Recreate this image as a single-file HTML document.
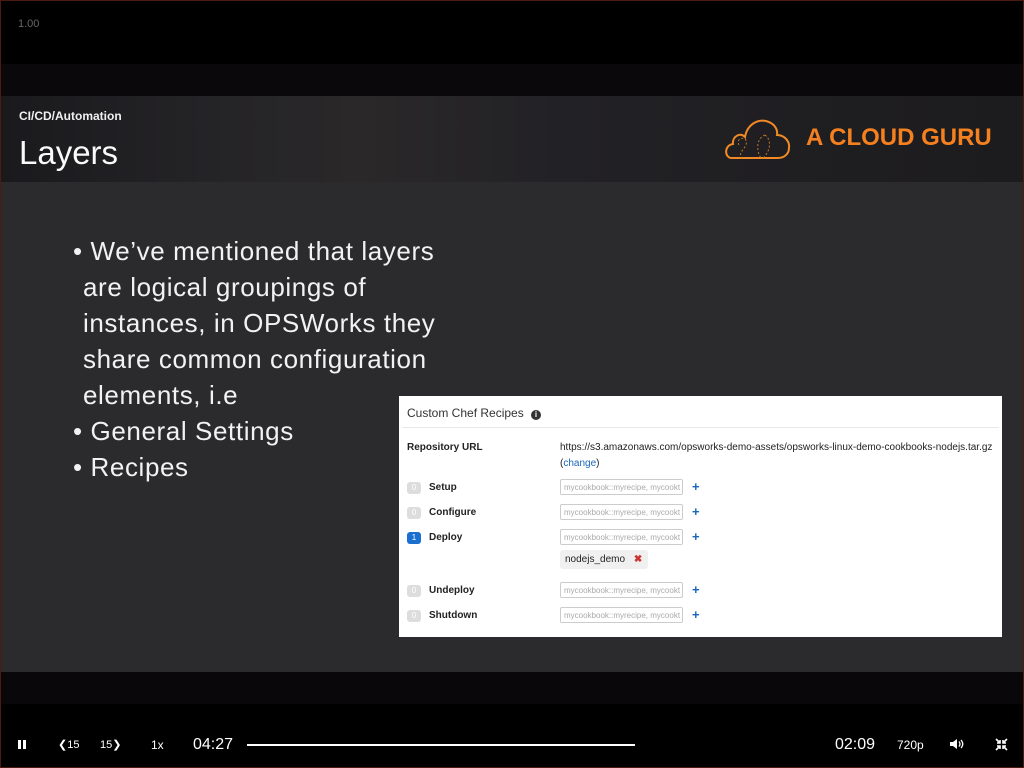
<!DOCTYPE html>
<html><head><meta charset="utf-8"><style>
*{margin:0;padding:0;box-sizing:border-box}
body{width:1024px;height:768px;background:#000;position:relative;overflow:hidden;font-family:"Liberation Sans",sans-serif;color:#fff}
.abs{position:absolute}
.frame{position:absolute;left:0;top:0;width:1024px;height:768px;border:1px solid #4a1c12;pointer-events:none}
.hdr{left:0;top:96px;width:1024px;height:86px;background:linear-gradient(90deg,#1a191c 0%,#242326 20%,#2a2829 35%,#222125 55%,#1c1b1d 100%)}
.bodyb{left:0;top:182px;width:1024px;height:490px;background:#2b2a2d}
.bul{left:73px;font-size:26px;color:#f2f2f2;line-height:36px;letter-spacing:0.6px}
.bul .in{padding-left:10px}
.card{left:399px;top:396px;width:603px;height:241px;background:#fff;color:#222;font-size:10px}
.lbl{position:absolute;left:30px;font-weight:bold;font-size:10px}
.badge{position:absolute;left:8px;width:14px;height:12px;border-radius:3px;background:#ddd;color:#fff;font-size:8px;text-align:center;line-height:12px}
.inp{position:absolute;left:161px;width:123px;height:16px;border:1px solid #ccc;border-radius:2px;color:#aaa;font-size:8px;padding:3px 3px;white-space:nowrap;overflow:hidden}
.plus{position:absolute;left:293px;color:#1a66b8;font-weight:bold;font-size:13px;line-height:13px}
.ctl{top:736px;font-size:13px;color:#fff}
</style></head><body>
<div class="abs" style="left:18px;top:18px;font-size:11px;color:#666">1.00</div>
<div class="abs" style="left:0;top:64px;width:1024px;height:32px;background:#0a080b"></div>
<div class="abs hdr"></div>
<div class="abs" style="left:19px;top:109px;font-size:12px;font-weight:bold;color:#f0f0f0">CI/CD/Automation</div>
<div class="abs" style="left:19px;top:134px;font-size:33px;color:#fafafa">Layers</div>
<svg class="abs" style="left:723px;top:117px" width="74" height="44" viewBox="0 0 74 44">
<path d="M9 41 C1 41 1 28 10 27 C9 19 18 15 22 20 C24 8 34 2 43 4 C51 6 55 12 54 18 C61 18 67 24 66 31 C66 37 61 41 55 41 Z" fill="none" stroke="#f08a24" stroke-width="2"/>
<path d="M16 28 C12 20 26 18 23 28 C20 34 15 36 19 41 M42 18 C32 22 34 36 38 41 M42 18 C50 24 46 36 40 41" fill="none" stroke="#c9761f" stroke-width="1" stroke-dasharray="2 2"/>
</svg>
<div class="abs" style="left:806px;top:124px;font-size:24px;font-weight:bold;color:#f5801f">A CLOUD GURU</div>
<div class="abs bodyb"></div>
<div class="abs bul" style="top:233px">• We’ve mentioned that layers<div class="in">are logical groupings of</div><div class="in">instances, in OPSWorks they</div><div class="in">share common configuration</div><div class="in">elements, i.e</div>• General Settings<br>• Recipes</div>
<div class="abs card">
<div style="position:absolute;left:8px;top:10px;font-size:12px;color:#333">Custom Chef Recipes <span style="display:inline-block;width:10px;height:10px;border-radius:50%;background:#333;color:#fff;font-size:8px;text-align:center;line-height:10px;font-weight:bold;margin-left:4px">i</span></div>
<div style="position:absolute;left:3px;top:31px;width:597px;height:1px;background:#e8e8e8"></div>
<div class="lbl" style="left:8px;top:46px">Repository URL</div>
<div style="position:absolute;left:161px;top:46px;font-size:10px;color:#222">https://s3.amazonaws.com/opsworks-demo-assets/opsworks-linux-demo-cookbooks-nodejs.tar.gz</div>
<div style="position:absolute;left:161px;top:62px;font-size:10px">(<span style="color:#1a66b8">change</span>)</div>
<div class="badge" style="top:86px">0</div><div class="lbl" style="top:86px">Setup</div><div class="inp" style="top:83px">mycookbook::myrecipe, mycookt</div><div class="plus" style="top:84px">+</div>
<div class="badge" style="top:111px">0</div><div class="lbl" style="top:111px">Configure</div><div class="inp" style="top:108px">mycookbook::myrecipe, mycookt</div><div class="plus" style="top:109px">+</div>
<div class="badge" style="top:136px;background:#1a6fd0">1</div><div class="lbl" style="top:136px">Deploy</div><div class="inp" style="top:133px">mycookbook::myrecipe, mycookt</div><div class="plus" style="top:134px">+</div>
<div style="position:absolute;left:161px;top:154px;width:88px;height:19px;background:#f0f0f0;border-radius:3px;font-size:10px;padding:4px 5px">nodejs_demo <span style="color:#c33;font-weight:bold;margin-left:6px">✖</span></div>
<div class="badge" style="top:189px">0</div><div class="lbl" style="top:189px">Undeploy</div><div class="inp" style="top:186px">mycookbook::myrecipe, mycookt</div><div class="plus" style="top:187px">+</div>
<div class="badge" style="top:214px">0</div><div class="lbl" style="top:214px">Shutdown</div><div class="inp" style="top:211px">mycookbook::myrecipe, mycookt</div><div class="plus" style="top:212px">+</div>
</div>
<div class="abs" style="left:0;top:672px;width:1024px;height:32px;background:#09070a"></div>
<div class="abs" style="left:18px;top:740px;width:3px;height:9px;background:#fff"></div>
<div class="abs" style="left:23px;top:740px;width:3px;height:9px;background:#fff"></div>
<div class="abs ctl" style="left:58px;font-size:11px;top:738px">❮15</div>
<div class="abs ctl" style="left:100px;font-size:11px;top:738px">15❯</div>
<div class="abs ctl" style="left:151px;font-size:12px;top:738px">1x</div>
<div class="abs ctl" style="left:193px;font-size:16px;top:736px">04:27</div>
<div class="abs" style="left:247px;top:744px;width:388px;height:2px;background:#fff"></div>
<div class="abs ctl" style="left:835px;font-size:16px;top:736px">02:09</div>
<div class="abs ctl" style="left:897px;font-size:12px;top:738px">720p</div>
<svg class="abs" style="left:949px;top:738px" width="16" height="12" viewBox="0 0 16 12"><path d="M1 4h3l4-3v10l-4-3H1z" fill="#fff"/><path d="M10 3.5q2 2.5 0 5M12 2q3.5 4 0 8" stroke="#fff" stroke-width="1.3" fill="none"/></svg>
<svg class="abs" style="left:995px;top:738px" width="13" height="13" viewBox="0 0 13 13"><path d="M1 1l4 4M5 2v3H2M12 1L8 5M8 2v3h3M1 12l4-4M5 11V8H2M12 12L8 8M8 11V8h3" stroke="#fff" stroke-width="1.6" fill="none"/></svg>
<div class="frame"></div>
</body></html>
